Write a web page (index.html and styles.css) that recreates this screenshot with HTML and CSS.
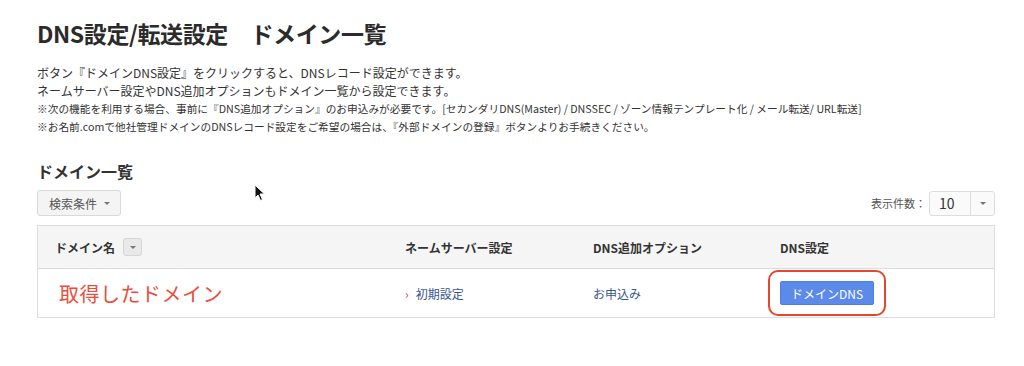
FILE: index.html
```html
<!DOCTYPE html>
<html lang="ja">
<head>
    <meta charset="UTF-8">
    <title>DNS設定/転送設定 ドメイン一覧</title>
    <link rel="stylesheet" href="styles.css">
</head>
<body>
    <div class="page">
        <h1>DNS設定/転送設定　ドメイン一覧</h1>

        <div class="intro">
            <p class="lead">ボタン『ドメインDNS設定』をクリックすると、DNSレコード設定ができます。</p>
            <p class="lead">ネームサーバー設定やDNS追加オプションもドメイン一覧から設定できます。</p>
            <p class="note">※次の機能を利用する場合、事前に『DNS追加オプション』のお申込みが必要です。[セカンダリDNS(Master) / DNSSEC / ゾーン情報テンプレート化 / メール転送/ URL転送]</p>
            <p class="note">※お名前.comで他社管理ドメインのDNSレコード設定をご希望の場合は、『外部ドメインの登録』ボタンよりお手続きください。</p>
        </div>

        <h2>ドメイン一覧</h2>

        <div class="toolbar">
            <button class="filter-btn">検索条件 <span class="caret"></span></button>
            <div class="per-page">
                <span class="per-page-label">表示件数：</span>
                <div class="select">
                    <span class="select-value">10</span>
                    <span class="select-arrow"><span class="caret"></span></span>
                </div>
            </div>
        </div>

        <div class="domain-table">
            <div class="row head">
                <div class="cell col-name">ドメイン名 <span class="sort-btn"><span class="caret"></span></span></div>
                <div class="cell col-ns">ネームサーバー設定</div>
                <div class="cell col-opt">DNS追加オプション</div>
                <div class="cell col-dns">DNS設定</div>
            </div>
            <div class="row body">
                <div class="cell col-name"><span class="domain-mark">取得したドメイン</span></div>
                <div class="cell col-ns"><a class="link" href="#"><span class="chev">›</span>初期設定</a></div>
                <div class="cell col-opt"><a class="link" href="#">お申込み</a></div>
                <div class="cell col-dns">
                    <span class="highlight">
                        <button class="dns-btn">ドメインDNS</button>
                    </span>
                </div>
            </div>
        </div>

        <svg class="cursor" width="12" height="18" viewBox="0 0 12 18">
            <path d="M1 1 L1 14 L4 11 L6.5 16.5 L8.5 15.5 L6 10 L10.5 10 Z" fill="#111" stroke="#fff" stroke-width="1"/>
        </svg>
    </div>
</body>
</html>
```

FILE: styles.css
```css
body {
    margin: 0;
    background: #fff;
    font-family: "Noto Sans CJK JP", "Liberation Sans", sans-serif;
    color: #333;
}
.page {
    position: relative;
    padding: 17px 29px 0 37px;
}
h1 {
    margin: 0;
    font-size: 23px;
    font-weight: bold;
    line-height: 33px;
    color: #2b2b2b;
    letter-spacing: -0.4px;
}
.intro {
    margin-top: 14px;
}
.intro p {
    margin: 0;
}
.lead {
    font-size: 12px;
    line-height: 18px;
    color: #333;
}
.note {
    font-size: 10.7px;
    line-height: 18px;
    color: #333;
}
h2 {
    margin: 23px 0 0;
    font-size: 16px;
    font-weight: bold;
    line-height: 24px;
    color: #333;
}
.toolbar {
    display: flex;
    justify-content: space-between;
    align-items: center;
    margin-top: 7px;
}
.filter-btn {
    display: flex;
    align-items: center;
    gap: 7px;
    height: 26px;
    padding: 0 10px 0 11px;
    border: 1px solid #d9d9d9;
    border-radius: 3px;
    background: #f4f4f4;
    font-family: inherit;
    font-size: 12px;
    color: #555;
}
.caret {
    display: inline-block;
    width: 0;
    height: 0;
    border-left: 3px solid transparent;
    border-right: 3px solid transparent;
    border-top: 3px solid #777;
}
.per-page {
    display: flex;
    align-items: center;
    gap: 3px;
}
.per-page-label {
    font-size: 11px;
    color: #555;
}
.select {
    display: flex;
    height: 23px;
    border: 1px solid #ddd;
    border-radius: 3px;
    background: #fafafa;
}
.select-value {
    width: 31px;
    padding-left: 9px;
    font-size: 14px;
    line-height: 23px;
    color: #333;
}
.select-arrow {
    display: flex;
    align-items: center;
    justify-content: center;
    width: 23px;
    border-left: 1px solid #ddd;
}
.domain-table {
    margin-top: 9px;
    border: 1px solid #ddd;
}
.row {
    display: flex;
    align-items: center;
}
.row.head {
    height: 42px;
    background: #f5f5f5;
    border-bottom: 1px solid #ddd;
    font-size: 12px;
    font-weight: bold;
    color: #333;
}
.row.body {
    height: 48px;
    background: #fff;
}
.cell {
    display: flex;
    align-items: center;
}
.col-name {
    width: 350px;
    padding-left: 17px;
}
.col-ns {
    width: 188px;
}
.col-opt {
    width: 187px;
}
.col-dns {
    flex: 1;
}
.sort-btn {
    display: inline-flex;
    align-items: center;
    justify-content: center;
    width: 17px;
    height: 16px;
    margin-left: 8px;
    border: 1px solid #d5d5d5;
    border-radius: 3px;
    background: #e9e9e9;
}
.domain-mark {
    padding-left: 4px;
    font-size: 20px;
    color: #ea4d3a;
    letter-spacing: 0.5px;
}
.link {
    font-size: 12px;
    color: #3a5690;
    text-decoration: none;
}
.chev {
    color: #c8463a;
    margin-right: 7px;
}
.highlight {
    display: inline-flex;
    margin-left: -12px;
    padding: 9px 10px;
    border: 2px solid #e5462d;
    border-radius: 10px;
}
.dns-btn {
    height: 24px;
    padding: 0 10px;
    border: 1px solid #4d7ee0;
    border-radius: 2px;
    background: #5b8ae8;
    font-family: inherit;
    font-size: 12px;
    color: #fff;
}
.cursor {
    position: absolute;
    left: 254px;
    top: 184px;
}
```
